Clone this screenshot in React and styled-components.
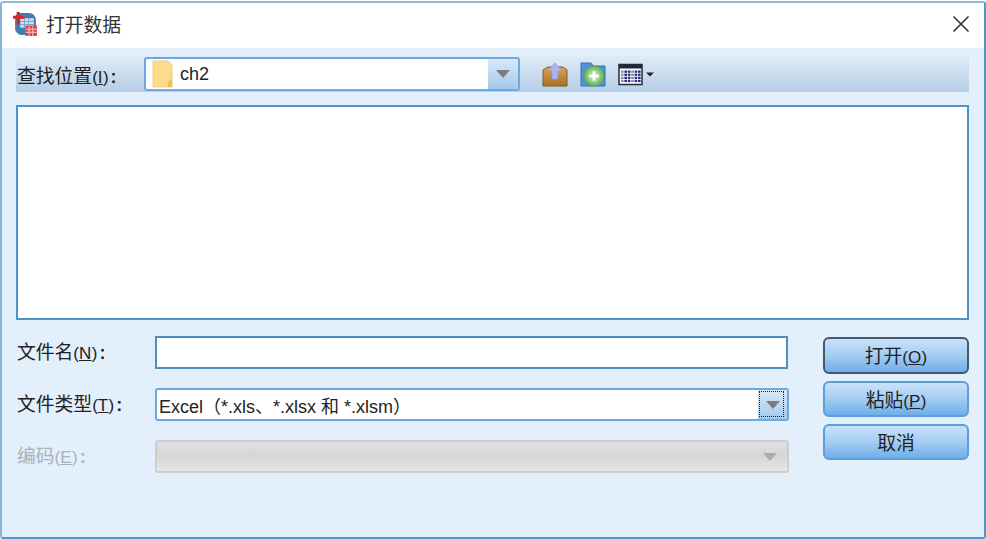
import React from "react";
import styled, { createGlobalStyle } from "styled-components";

const GlobalStyle = createGlobalStyle`
  html, body {
    margin: 0;
    padding: 0;
    background: #ffffff;
  }
  body {
    font-family: "Liberation Sans", "Noto Sans CJK SC", sans-serif;
  }
`;

const Window = styled.div`
  box-sizing: border-box;
  width: 986px;
  height: 538px;
  margin-top: 1px;
  border: 2px solid;
  border-color: #8db9d8 #4f97cc #4f97cc #86b5d6;
  border-radius: 3px;
  background: #e3effb;
  display: flex;
  flex-direction: column;
  color: #222;
  font-size: 18px;
  overflow: hidden;
`;

const TitleBar = styled.div`
  box-sizing: border-box;
  height: 45px;
  flex: none;
  background: #ffffff;
  display: flex;
  align-items: center;
  padding: 0 14px 4px 10px;
  gap: 8px;
`;

const TitleText = styled.div`
  flex: 1;
  font-size: 18.8px;
  color: #333;
`;

const Content = styled.div`
  display: flex;
  flex-direction: column;
  padding: 8px 15px 0 14px;
`;

const Toolbar = styled.div`
  height: 36px;
  display: flex;
  align-items: center;
  background: linear-gradient(#deebf8, #b5cee6);
  padding-left: 1px;
`;

const FieldLabel = styled.label`
  display: block;
  font-size: 18.8px;
  white-space: nowrap;
  color: ${(props) => (props.disabled ? "#a7b2bc" : "#222")};
`;

const Mnemonic = styled.span`
  font-size: 17px;
  letter-spacing: 0.4px;
  text-decoration: underline;
`;

const Paren = styled.span`
  font-size: 17px;
`;

const Colon = styled.span`
  font-size: 18px;
  font-weight: 700;
  margin-left: 2px;
`;

const LookInLabel = styled(FieldLabel)`
  width: 127px;
  flex: none;
`;

const Combo = styled.div`
  box-sizing: border-box;
  height: ${(props) => props.height || 33}px;
  width: ${(props) => props.width}px;
  flex: none;
  display: flex;
  align-items: stretch;
  border: 2px solid ${(props) => (props.disabled ? "#cdcdcd" : "#6da9e0")};
  border-radius: 3px;
  background: ${(props) =>
    props.disabled
      ? "linear-gradient(#e2e2e2, #d6d6d6 45%, #e6e6e6)"
      : "#ffffff"};
  overflow: hidden;
`;

const ComboValue = styled.div`
  flex: 1;
  display: flex;
  align-items: center;
  gap: 6px;
  padding-left: ${(props) => props.pad || 2}px;
  font-size: 18px;
  white-space: nowrap;
`;

const ComboArrow = styled.div`
  position: relative;
  width: ${(props) => props.width || 30}px;
  flex: none;
  display: flex;
  align-items: center;
  justify-content: center;
  background: ${(props) =>
    props.disabled ? "transparent" : "linear-gradient(#dbe9f8, #a3c9ee)"};
`;

const Triangle = styled.div`
  width: 0;
  height: 0;
  border-left: 7px solid transparent;
  border-right: 7px solid transparent;
  border-top: 8px solid ${(props) => (props.disabled ? "#adadad" : "#7d7d7d")};
`;

const FocusRect = styled.div`
  position: absolute;
  left: 1px;
  right: 3px;
  top: 1px;
  bottom: 2px;
  border: 1px dotted #222;
`;

const ToolIcons = styled.div`
  display: flex;
  align-items: center;
  margin-left: 22px;
  gap: 12px;
`;

const FileList = styled.div`
  box-sizing: border-box;
  height: 215px;
  margin-top: 13px;
  background: #ffffff;
  border: 2px solid #4f93c6;
`;

const BottomArea = styled.div`
  display: flex;
  align-items: flex-start;
  margin-top: 17px;
`;

const Fields = styled.div`
  width: 772px;
  flex: none;
  display: flex;
  flex-direction: column;
  gap: 19px;
  margin-top: -1px;
`;

const FieldRow = styled.div`
  display: flex;
  align-items: center;
  padding-left: 1px;
`;

const RowLabel = styled(FieldLabel)`
  width: 138px;
  flex: none;
  margin-top: -4px;
`;

const TextInput = styled.div`
  box-sizing: border-box;
  width: 634px;
  height: 33px;
  background: #ffffff;
  border: 2px solid #4f8fc0;
`;

const Buttons = styled.div`
  margin-left: 35px;
  width: 146px;
  display: flex;
  flex-direction: column;
  gap: 7px;
`;

const DialogButton = styled.button`
  box-sizing: border-box;
  width: 146px;
  height: ${(props) => (props.$primary ? 37 : 36)}px;
  padding: 0 0 2px;
  border-radius: 6px;
  border: 2px solid ${(props) => (props.$primary ? "#44586e" : "#5a9fdc")};
  background: linear-gradient(#c9e2f9, #a4cdf3 50%, #6eaee9);
  font-family: inherit;
  font-size: 18.8px;
  color: #222;
`;

function AppIcon() {
  return (
    <svg width="26" height="26" viewBox="0 0 25 25">
      <path d="M3 7c0-3 2-5 5-5h8c4 0 7 3 7 7v7c0 4-3 7-7 7H9c-3 0-6-3-6-6z" fill="#3f7fb5" />
      <rect x="8" y="7" width="13" height="9" fill="#cfe0f0" />
      <path d="M8 10h13M8 13h13M12 7v9M16 7v9" stroke="#7fa6c8" />
      <path d="M6 1v12M1 6h11" stroke="#d8232a" strokeWidth="3" />
      <rect x="13" y="14" width="11" height="10" fill="#d9464c" />
      <path d="M13 17.500h11M13 20.500h11M16.500 15v9M20 15v9" stroke="#f5c6c8" />
    </svg>
  );
}

function FolderIcon() {
  return (
    <svg width="22" height="28" viewBox="0 0 22 28">
      <path d="M1 1h15l4 4v22H1z" fill="#fbdc8c" stroke="#f0cf80" />
      <path d="M16 27v-5l4-4v9z" fill="#eebf5c" />
    </svg>
  );
}

function UpFolderIcon() {
  return (
    <svg width="26" height="25" viewBox="0 0 26 25">
      <defs>
        <linearGradient id="upBrown" x1="0" y1="0" x2="0" y2="1">
          <stop offset="0" stopColor="#dca24e" />
          <stop offset="1" stopColor="#a8702a" />
        </linearGradient>
      </defs>
      <path d="M1 8l5-3h15l4 3v16H1z" fill="url(#upBrown)" stroke="#7d5a2c" />
      <path d="M13 1l7 8h-4v8h-6V9H6z" fill="#a9b6ea" stroke="#8c9ad6" strokeWidth="0.7" />
    </svg>
  );
}

function NewFolderIcon() {
  return (
    <svg width="26" height="27" viewBox="0 0 26 27">
      <path d="M1 2h10l2 3h12v20H1z" fill="#4d94dc" stroke="#2f70bb" />
      <circle cx="14" cy="15" r="10" fill="#7fbe68" stroke="#5f9f4c" />
      <circle cx="14" cy="15" r="6.500" fill="#a6d795" />
      <path d="M14 10.500v9M9.500 15h9" stroke="#ffffff" strokeWidth="3" />
    </svg>
  );
}

function ViewIcon() {
  const dots = [];
  for (let row = 0; row < 4; row++) {
    for (let col = 0; col < 6; col++) {
      dots.push(
        <rect
          key={`${row}-${col}`}
          x={3 + col * 3.4}
          y={7 + row * 3.1}
          width="2.600"
          height="2.300"
          fill={col % 3 === 0 ? "#8d8d9d" : "#2b2b80"}
        />
      );
    }
  }
  return (
    <svg width="36" height="23" viewBox="0 0 36 22">
      <rect x="1" y="1" width="23" height="20" fill="#ffffff" stroke="#1e2a3a" strokeWidth="1.500" />
      <rect x="1" y="1" width="23" height="4" fill="#1e2a3a" />
      {dots}
      <path d="M28 9h8l-4 4z" fill="#222" />
    </svg>
  );
}

function CloseIcon() {
  return (
    <svg width="18" height="18" viewBox="0 0 18 18">
      <path d="M1.500 1.500l15 15M16.500 1.500l-15 15" stroke="#333" strokeWidth="1.600" />
    </svg>
  );
}

function Label({ as: Comp, text, letter, disabled }) {
  return (
    <Comp disabled={disabled}>
      {text}
      <Paren>(</Paren>
      <Mnemonic>{letter}</Mnemonic>
      <Paren>)</Paren>
      <Colon>:</Colon>
    </Comp>
  );
}

export default function App() {
  return (
    <>
      <GlobalStyle />
      <Window>
        <TitleBar>
          <AppIcon />
          <TitleText>打开数据</TitleText>
          <CloseIcon />
        </TitleBar>
        <Content>
          <Toolbar>
            <Label as={LookInLabel} text="查找位置" letter="I" />
            <Combo width={376} height={34}>
              <ComboValue pad={6}>
                <FolderIcon />
                ch2
              </ComboValue>
              <ComboArrow>
                <Triangle />
              </ComboArrow>
            </Combo>
            <ToolIcons>
              <UpFolderIcon />
              <NewFolderIcon />
              <ViewIcon />
            </ToolIcons>
          </Toolbar>
          <FileList />
          <BottomArea>
            <Fields>
              <FieldRow>
                <Label as={RowLabel} text="文件名" letter="N" />
                <TextInput />
              </FieldRow>
              <FieldRow>
                <Label as={RowLabel} text="文件类型" letter="T" />
                <Combo width={634} height={33}>
                  <ComboValue>Excel（*.xls、*.xlsx 和 *.xlsm）</ComboValue>
                  <ComboArrow width={29}>
                    <Triangle />
                    <FocusRect />
                  </ComboArrow>
                </Combo>
              </FieldRow>
              <FieldRow>
                <Label as={RowLabel} text="编码" letter="E" disabled />
                <Combo width={634} height={33} disabled>
                  <ComboValue />
                  <ComboArrow width={34} disabled>
                    <Triangle disabled />
                  </ComboArrow>
                </Combo>
              </FieldRow>
            </Fields>
            <Buttons>
              <DialogButton $primary>
                打开<Paren>(</Paren>
                <Mnemonic>O</Mnemonic>
                <Paren>)</Paren>
              </DialogButton>
              <DialogButton>
                粘贴<Paren>(</Paren>
                <Mnemonic>P</Mnemonic>
                <Paren>)</Paren>
              </DialogButton>
              <DialogButton>取消</DialogButton>
            </Buttons>
          </BottomArea>
        </Content>
      </Window>
    </>
  );
}
